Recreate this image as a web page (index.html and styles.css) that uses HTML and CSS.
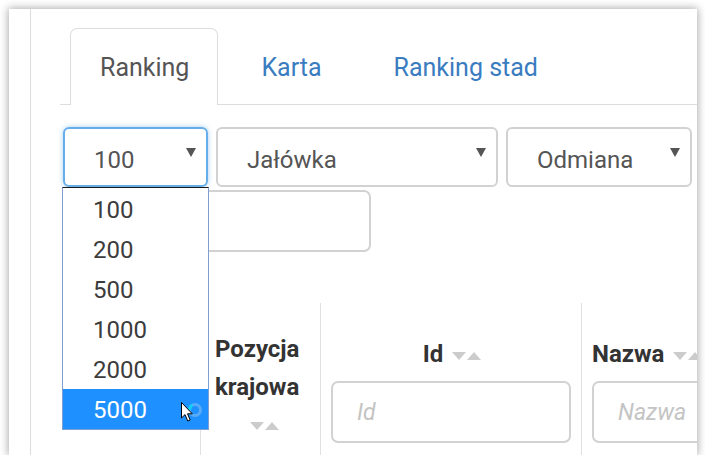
FILE: index.html
```html
<!DOCTYPE html>
<html lang="pl">
<head>
<meta charset="utf-8">
<title>Ranking</title>
<link rel="stylesheet" href="styles.css">
</head>
<body>
<div class="window">
  <div class="rail"></div>
  <div class="main">
    <ul class="tabs">
      <li class="tab active">Ranking</li>
      <li class="tab">Karta</li>
      <li class="tab">Ranking stad</li>
    </ul>
    <div class="filters">
      <div class="row">
        <div class="select focus w1"><span class="val">100</span><span class="caret"></span></div>
        <div class="select w2"><span class="val">Jałówka</span><span class="caret"></span></div>
        <div class="select w3"><span class="val">Odmiana</span><span class="caret"></span></div>
      </div>
      <div class="row">
        <div class="box wide"></div>
      </div>
    </div>
    <div class="grid">
      <div class="cell c0"></div>
      <div class="cell c1">
        <div class="label">Pozycja<br>krajowa</div>
        <div class="sorter under"><span class="down"></span><span class="up"></span></div>
      </div>
      <div class="cell c2">
        <div class="label center">Id <span class="sorter"><span class="down"></span><span class="up"></span></span></div>
        <div class="box filter"><span class="ph">Id</span></div>
      </div>
      <div class="cell c3">
        <div class="label">Nazwa <span class="sorter"><span class="down"></span><span class="up"></span></span></div>
        <div class="box filter"><span class="ph">Nazwa</span></div>
      </div>
    </div>
  </div>
  <ul class="dropdown">
    <li>100</li>
    <li>200</li>
    <li>500</li>
    <li>1000</li>
    <li>2000</li>
    <li class="hl">5000</li>
  </ul>
  <svg class="pointer" width="30" height="26" viewBox="0 0 30 26">
    <circle cx="15" cy="9" r="5.5" fill="none" stroke="#58abf6" stroke-width="3"/>
    <path d="M9.5 9 A5.5 5.5 0 0 1 12.5 4" fill="none" stroke="#10d2f6" stroke-width="3"/>
    <path d="M1.5 1.5 L1.5 17 L5 13.6 L7.8 20 L10.2 19 L7.5 12.8 L12.3 12.8 Z" fill="#fff" stroke="#000" stroke-width="1" stroke-linejoin="round"/>
  </svg>
</div>
</body>
</html>
```
FILE: styles.css
```css
html, body {
  margin: 0;
  padding: 0;
  background: #ffffff;
}
body {
  font-family: Roboto, "Noto Sans", "DejaVu Sans", sans-serif;
  color: #555555;
}
.window {
  position: relative;
  margin: 9px 0 0 9px;
  width: 688px;
  height: 446px;
  background: #ffffff;
  box-shadow: 0 0 8px 1px rgba(0, 0, 0, 0.32);
  overflow: hidden;
  display: flex;
}
.rail {
  flex: 0 0 21px;
  border-right: 1px solid #dcdcdc;
}
.main {
  flex: 1 0 auto;
  padding-left: 29px;
}
.tabs {
  list-style: none;
  margin: 19px 0 0 0;
  padding: 0 0 0 10px;
  display: flex;
  border-bottom: 1px solid #dddddd;
  width: 900px;
}
.tab {
  height: 75px;
  line-height: 77px;
  padding: 0 28px 0 29px;
  margin-right: 13px;
  font-size: 25px;
  color: #3a7cc0;
  border: 1px solid transparent;
  border-bottom: none;
}
.tab.active {
  color: #555555;
  border-color: #dddddd;
  border-radius: 7px 7px 0 0;
  background: #ffffff;
  height: 76px;
  margin-bottom: -1px;
}
.filters {
  padding: 22px 0 0 3px;
}
.row {
  display: flex;
  gap: 8px;
}
.row + .row {
  margin-top: 3px;
}
.select {
  box-sizing: border-box;
  height: 60px;
  border: 2px solid #d2d2d2;
  border-radius: 6px;
  display: flex;
  align-items: center;
  padding: 5px 10px 0 29px;
  font-size: 24px;
  color: #555555;
}
.select .val {
  flex: 1;
}
.select.focus {
  border-color: #66aee9;
  box-shadow: 0 0 5px rgba(102, 175, 233, 0.6);
}
.w1 { width: 145px; }
.w2 { width: 282px; }
.w3 { width: 186px; }
.caret {
  width: 0;
  height: 0;
  border-left: 5px solid transparent;
  border-right: 5px solid transparent;
  border-top: 9px solid #555555;
  margin-bottom: 14px;
}
.box {
  box-sizing: border-box;
  border: 2px solid #d2d2d2;
  border-radius: 7px;
  height: 62px;
  background: #ffffff;
}
.wide { width: 308px; }
.grid {
  display: flex;
  margin: 51px 0 0 3px;
  height: 160px;
}
.cell {
  box-sizing: border-box;
  border-left: 1px solid #e0e0e0;
}
.c0 { width: 137px; border-left: none; }
.c1 { width: 120px; padding: 27px 0 0 14px; }
.c2 { width: 261px; padding: 32px 10px 0 10px; }
.c3 { width: 220px; padding: 32px 0 0 10px; }
.label {
  font-weight: 700;
  font-size: 24px;
  line-height: 38px;
  color: #333333;
  white-space: nowrap;
}
.label.center { text-align: center; padding-left: 2px; }
.sorter {
  display: inline-flex;
  align-items: center;
  vertical-align: middle;
  margin-left: 3px;
  gap: 1px;
}
.sorter.under {
  display: flex;
  margin: 16px 0 0 35px;
}
.down, .up {
  width: 0;
  height: 0;
  border-left: 7px solid transparent;
  border-right: 7px solid transparent;
}
.down { border-top: 8px solid #cccccc; }
.up { border-bottom: 8px solid #cccccc; }
.filter {
  margin-top: 8px;
  display: flex;
  align-items: center;
  padding-left: 24px;
}
.c3 .filter { width: 240px; padding-left: 24px; }
.ph {
  font-style: italic;
  font-size: 23px;
  color: #c4c4c4;
}
.dropdown {
  position: absolute;
  left: 53px;
  top: 178px;
  width: 147px;
  box-sizing: border-box;
  margin: 0;
  padding: 1px 0 0 0;
  list-style: none;
  background: #ffffff;
  border: 1px solid #7f9fd2;
  border-top-color: #1a1a1a;
}
.dropdown li {
  height: 40px;
  line-height: 42px;
  padding-left: 30px;
  font-size: 24px;
  color: #3c3c3c;
}
.dropdown li.hl {
  background: #1e90ff;
  color: #ffffff;
}
.pointer {
  position: absolute;
  left: 171px;
  top: 392px;
}
```
